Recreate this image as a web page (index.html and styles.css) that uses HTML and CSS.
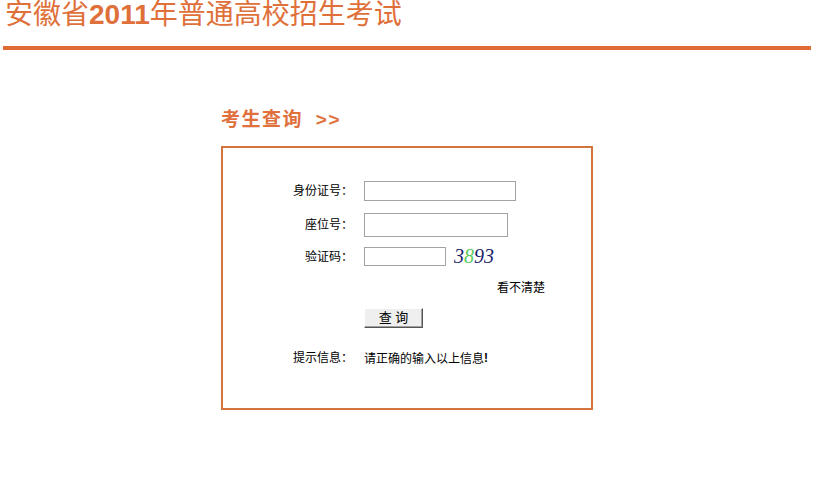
FILE: index.html
```html
<!DOCTYPE html>
<html lang="zh-CN">
<head>
  <meta charset="UTF-8" />
  <title>安徽省2011年普通高校招生考试</title>
  <link rel="stylesheet" href="styles.css">
</head>
<body>

<div class="header">
  <h1>安徽省<span class="year">2011</span>年普通高校招生考试</h1>
</div>
<div class="rule"></div>

<div class="main">
  <h2>考生查询 <span class="arrow">&gt;&gt;</span></h2>

  <div class="box">
    <div class="row row-id">
      <label class="label" for="sfzh">身份证号：</label>
      <div class="field"><input type="text" id="sfzh" class="inp-id"></div>
    </div>
    <div class="row row-seat">
      <label class="label" for="zwh">座位号：</label>
      <div class="field"><input type="text" id="zwh" class="inp-seat"></div>
    </div>
    <div class="row row-code">
      <label class="label" for="yzm">验证码：</label>
      <div class="field">
        <input type="text" id="yzm" class="inp-code">
        <span class="captcha">3<span class="green">8</span>93</span>
      </div>
    </div>
    <div class="row row-refresh">
      <div class="label"></div>
      <div class="field"><a class="refresh">看不清楚</a></div>
    </div>
    <div class="row row-btn">
      <div class="label"></div>
      <div class="field"><button type="button" class="btn">查 询</button></div>
    </div>
    <div class="row row-tip">
      <div class="label">提示信息：</div>
      <div class="field">请正确的输入以上信息<b class="bang">!</b></div>
    </div>
  </div>
</div>

</body>
</html>
```

FILE: styles.css
```css
body {
  margin: 0;
  font-family: "Liberation Sans", "Noto Sans CJK SC", sans-serif;
  font-size: 12px;
  color: #000;
  background: #fff;
}

.header {
  padding: 0 0 0 5px;
  height: 32px;
}

h1 {
  margin: 0;
  font-size: 28px;
  line-height: 30px;
  font-weight: normal;
  color: #e0703a;
}

h1 .year {
  font-family: "Liberation Sans", sans-serif;
  font-weight: bold;
}

.rule {
  height: 4px;
  margin: 14px 10px 0 3px;
  background: #e06c35;
}

.main {
  margin-left: 221px;
  width: 372px;
}

h2 {
  margin: 56px 0 0 0;
  height: 28px;
  line-height: 28px;
  font-size: 19px;
  font-weight: bold;
  color: #e0703c;
  letter-spacing: 1.5px;
}

h2 .arrow {
  margin-left: 6px;
}

.box {
  margin-top: 12px;
  height: 264px;
  border: 2px solid #d3743f;
  padding-top: 33px;
  box-sizing: border-box;
}

.row {
  display: flex;
  align-items: center;
}

.label {
  width: 130px;
  text-align: right;
  line-height: 16px;
}

.colon {
  display: inline-block;
  width: 12px;
}

.field {
  margin-left: 11px;
  display: flex;
  align-items: center;
}

input {
  margin: 0;
  padding: 0 2px;
  border: 1px solid #a3a3a3;
  box-sizing: border-box;
  font-size: 12px;
  outline: none;
}

.inp-id { width: 152px; height: 20px; }
.inp-seat { width: 144px; height: 24px; }
.inp-code { width: 82px; height: 19px; }

.row-seat { margin-top: 12px; }
.row-code { margin-top: 10px; }

.captcha {
  margin-left: 8px;
  font-family: "Liberation Serif", serif;
  font-style: italic;
  font-size: 20px;
  line-height: 19px;
  color: #1c1c6c;
}

.captcha .green {
  color: #5ccc5c;
}

.row-refresh {
  margin-top: 14px;
}

.refresh {
  margin-left: 133px;
  line-height: 16px;
  color: #000;
}

.row-btn {
  margin-top: 12px;
}

.btn {
  width: 59px;
  height: 20px;
  padding: 0;
  font-family: "Liberation Sans", "Noto Sans CJK SC", sans-serif;
  font-size: 13px;
  line-height: 16px;
  background: #efefef;
  border: 1px solid;
  border-color: #fff #555 #555 #fff;
  box-shadow: inset -1px -1px 0 #a0a0a0;
  color: #000;
}

.row-tip {
  margin-top: 21px;
}

.bang {
  font-weight: bold;
}
```
